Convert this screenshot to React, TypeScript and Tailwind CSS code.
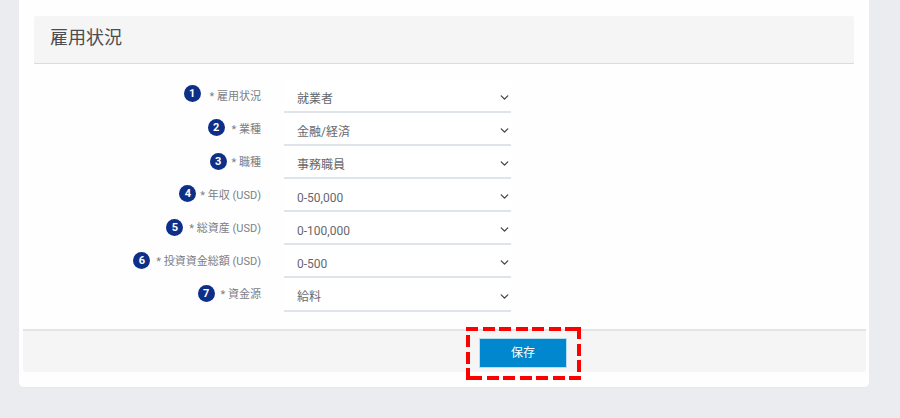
import { ChevronDown } from "lucide-react";

const rows = [
  { label: "雇用状況", value: "就業者", offset: "mt-[-4px]", gap: "mr-[9px]", height: "h-[33px]" },
  { label: "業種", value: "金融/経済", offset: "mt-[-3px]", gap: "mr-[7px]", height: "h-[33px]" },
  { label: "職種", value: "事務職員", offset: "mt-[-2px]", gap: "mr-[5px]", height: "h-[33px]" },
  { label: "年収 (USD)", value: "0-50,000", offset: "mt-[-3px]", gap: "mr-[4px]", height: "h-[33px]" },
  { label: "総資産 (USD)", value: "0-100,000", offset: "mt-[-2px]", gap: "mr-[6px]", height: "h-[33px]" },
  { label: "投資資金総額 (USD)", value: "0-500", offset: "mt-[-2px]", gap: "mr-[6px]", height: "h-[33px]" },
  { label: "資金源", value: "給料", offset: "mt-[-2px]", gap: "mr-[6px]", height: "h-[34px]" },
];

// dashes of the hand-drawn highlight box: [x, y, w, h]
const dashes = [
  [0, 0, 12, 4], [17, 0, 12, 4], [33, 0, 12, 4], [50, 0, 12, 4], [66, 0, 12, 4], [83, 0, 12, 4], [99, 0, 16, 4],
  [111, 0, 4, 12], [111, 17, 4, 12], [111, 33, 4, 12],
  [0, 49, 16, 4], [21, 49, 12, 4], [37, 49, 12, 4], [54, 49, 12, 4], [70, 49, 12, 4], [87, 49, 12, 4], [103, 49, 12, 4],
  [0, 8, 4, 12], [0, 25, 4, 12], [0, 41, 4, 12],
];

const font = "font-['Roboto','Noto_Sans_CJK_JP','Noto_Sans',sans-serif]";

function Row({ n, row }: { n: number; row: (typeof rows)[number] }) {
  return (
    <div className={`flex ${row.height}`}>
      <div className="flex w-[242px] items-start justify-end pt-[9px] text-[11px] leading-[16px] text-[#7d7f85]">
        <span
          className={`${row.gap} ${row.offset} flex h-[17px] w-[17px] items-center justify-center rounded-full bg-[#0e2f87] text-[11px] font-bold text-white`}
        >
          {n}
        </span>
        <span>* {row.label}</span>
      </div>
      <div className="ml-[23px] flex w-[227px] items-center justify-between border-b-2 border-[#dfe3ea] bg-white pl-[13px] pt-[4px] text-[12px] text-[#66686d]">
        <span className="pt-[2px]">{row.value}</span>
        <ChevronDown size={13} strokeWidth={2.5} className="text-[#44474d]" />
      </div>
    </div>
  );
}

export default function App() {
  return (
    <div className={`${font} h-[418px] w-[900px] overflow-hidden bg-[#ebecf0]`}>
      <div className="ml-[19px] flex h-[388px] w-[850px] flex-col rounded-b-[5px] border-b border-[#e6e7eb] bg-[#fefefe]">
        <div className="ml-[15px] mt-[16px] flex h-[48px] w-[820px] items-center rounded-t-[3px] border-b border-[#dcdcdc] bg-[#f5f5f5] pb-[5px] pl-[16px] text-[18px] text-[#4b4d52]">
          雇用状況
        </div>
        <div className="mt-[16px] flex flex-col">
          {rows.map((row, i) => (
            <Row key={row.label} n={i + 1} row={row} />
          ))}
        </div>
        <div className="relative ml-[4px] mt-[17px] h-[43px] w-[843px] rounded-b-[3px] border-t-2 border-[#e4e4e6] bg-[#f5f5f5] pl-[456px] pt-[7px]">
          <button className="h-[30px] w-[88px] border border-[#b6deef] bg-[#0087cd] text-[12px] text-white">
            保存
          </button>
          {/* red highlight drawn over the save button */}
          <svg width="115" height="53" className="absolute left-[443px] top-[-4px]">
            {dashes.map(([x, y, w, h]) => (
              <rect key={`${x}-${y}-${w}`} x={x} y={y} width={w} height={h} fill="#ff0000" />
            ))}
          </svg>
        </div>
      </div>
    </div>
  );
}
